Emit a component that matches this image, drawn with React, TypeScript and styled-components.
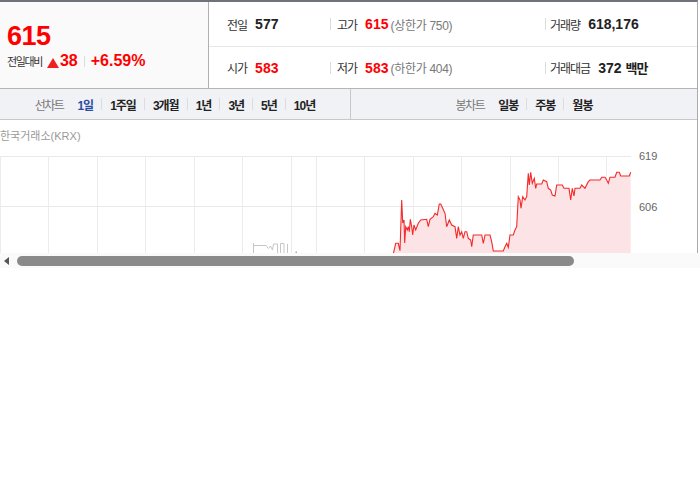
import React from 'react';
import styled, { createGlobalStyle } from 'styled-components';

const Global = createGlobalStyle`
  *, *::before, *::after { box-sizing: border-box; }
  html, body { margin: 0; padding: 0; background: #fff; }
  body { font-family: "Liberation Sans", "Noto Sans CJK KR", sans-serif; color: #222; }
`;

const Frame = styled.div`
  width: 700px;
`;

const Viewport = styled.div`
  height: 253px;
  overflow: hidden;
`;

const ScrollBar = styled.div`
  display: flex;
  align-items: center;
  height: 15px;
  background: #fafafa;
  padding-left: 4px;
`;

const ArrowLeft = styled.svg`
  width: 5px;
  height: 8px;
  margin-right: 8px;
`;

const Thumb = styled.div`
  width: 557px;
  height: 10px;
  border-radius: 5px;
  background: #8a8a8a;
`;

const Board = styled.div`
  width: 698px;
  border-top: 2px solid #6f727b;
  border-right: 1px solid #aaa;
`;

const Header = styled.div`
  display: flex;
  height: 87px;
  border-bottom: 1px solid #b5b5b5;
`;

const PricePanel = styled.div`
  width: 209px;
  padding: 19px 0 0 7px;
  background: #fafafa;
  border-right: 1px solid #b0b0b0;
`;

const BigPrice = styled.div`
  font-size: 27px;
  line-height: 30px;
  font-weight: 700;
  color: #f00;
  letter-spacing: -0.5px;
`;

const ChangeRow = styled.div`
  display: flex;
  align-items: baseline;
  line-height: 20px;
`;

const ChangeLabel = styled.span`
  font-size: 11px;
  letter-spacing: -1.4px;
  color: #333;
  margin-right: 5px;
`;

const UpMark = styled.svg`
  width: 12px;
  height: 10px;
  margin-right: 1px;
  align-self: center;
  position: relative;
  top: 1px;
`;

const ChangeNum = styled.span`
  font-size: 16px;
  font-weight: 700;
  color: #f00;
`;

const MiniSep = styled.span`
  display: inline-block;
  width: 1px;
  height: 11px;
  background: #ddd;
  margin: 0 6px;
  align-self: center;
`;

const Stats = styled.div`
  flex: 1;
  display: grid;
  grid-template-columns: 121px 215px 1fr;
  grid-template-rows: 45px 1fr;
`;

const Cell = styled.div<{ $top?: boolean; $pad: number }>`
  display: flex;
  align-items: center;
  padding-left: ${(p) => p.$pad}px;
  border-bottom: ${(p) => (p.$top ? '1px solid #e6e6e6' : 'none')};
  white-space: nowrap;
`;

const CellSep = styled.span<{ $gap: number }>`
  width: 1px;
  height: 12px;
  background: #dcdcdc;
  margin-right: ${(p) => p.$gap}px;
`;

const Label = styled.span`
  font-size: 12px;
  letter-spacing: -1px;
  color: #333;
  margin-right: 8px;
`;

const Value = styled.span<{ $red?: boolean }>`
  font-size: 14px;
  font-weight: 700;
  color: ${(p) => (p.$red ? '#f00' : '#222')};
`;

const Note = styled.span`
  font-size: 12px;
  color: #777;
  margin-left: 2px;
  letter-spacing: -0.3px;
`;

const Unit = styled.span`
  font-size: 13px;
  font-weight: 700;
  color: #222;
  margin-left: 4px;
  letter-spacing: -1px;
`;

const TabBar = styled.div`
  display: grid;
  grid-template-columns: 351px 1fr;
  height: 31px;
  background: #f1f2f6;
  border-bottom: 1px solid #c8c8c8;
`;

const TabGroup = styled.div<{ $divider?: boolean }>`
  display: flex;
  align-items: center;
  justify-content: center;
  border-right: ${(p) => (p.$divider ? '1px solid #c8c8c8' : 'none')};
`;

const TabTitle = styled.span`
  font-size: 12px;
  letter-spacing: -1.5px;
  color: #777;
  margin-right: 14px;
`;

const Tab = styled.span<{ $active?: boolean }>`
  font-size: 12px;
  font-weight: 700;
  letter-spacing: -1px;
  color: ${(p) => (p.$active ? '#2a4d9f' : '#222')};
`;

const TabSep = styled.span`
  width: 1px;
  height: 12px;
  background: #dcdcdc;
  margin: 0 8px;
`;

const ChartArea = styled.div`
  padding-top: 9px;
  height: 260px;
`;

const Source = styled.div`
  font-size: 11px;
  line-height: 14px;
  color: #999;
  margin-bottom: 3px;
`;

const ChartSvg = styled.svg`
  display: block;
`;

const redPts: [number, number][] = [
  [393.3, 254], [395.7, 243.3], [398.3, 243.3], [400, 250.7], [401.7, 200], [402.7, 223], [404, 220],
  [404.7, 243], [405.7, 226.7], [407.3, 230], [408.3, 226.7], [409.3, 231.7], [410.3, 219.3],
  [411.7, 226.7], [412.7, 235], [414, 225], [415.7, 230], [418.3, 223.3], [420.7, 220], [426.7, 219.3],
  [428.3, 226.7], [430, 219.3], [433.3, 216.7], [435, 213.3], [437.3, 215], [439.3, 204], [440.7, 204],
  [442.7, 208.3], [445, 213.3], [446.7, 226.7], [449.3, 220], [451.7, 225], [455, 226.7], [456.7, 238.3],
  [458.3, 226.7], [460, 235], [461.7, 231.7], [463.3, 238.3], [465, 231.7], [466.7, 231.7], [468.3, 238.3],
  [470.7, 240], [471.7, 246.7], [473.3, 235], [481.7, 235], [483.3, 243.3], [485, 235], [490, 235],
  [491.7, 241.7], [493.3, 251], [503.3, 251], [505, 246.7], [506.7, 243.3], [508.3, 247.3], [510, 235],
  [513.3, 235], [515, 230], [516.7, 226.7], [518.3, 196.7], [520, 200], [521, 208.3], [522.7, 196.7],
  [525, 200], [526.7, 196.7], [528.3, 173.3], [529.3, 185], [530.7, 172.3], [532.3, 183.3], [534.3, 178.3],
  [535.7, 188.3], [536.7, 184], [541.7, 184], [543.3, 180], [546.7, 181.7], [548.3, 188.3], [550.7, 190],
  [552.3, 195], [555, 196], [556.7, 185], [562.3, 185], [564, 188.3], [569, 188.3], [570.7, 200],
  [572.3, 188.3], [574, 196], [575, 188.3], [580, 188.3], [581.7, 185], [585, 188.3], [588.3, 181.7],
  [590, 180], [600, 180], [601.7, 177.3], [605, 177.3], [606.7, 180], [608.3, 183.3], [610, 177.3],
  [615, 177.3], [616.7, 172.3], [619.3, 172.3], [620.7, 176], [629.3, 176], [630.7, 172.3],
];

const vLines = [0.5, 48.5, 97.5, 145.5, 194.5, 242.5, 291.5, 316.5, 364.5, 413.5, 461.5, 510.5, 558.5, 606.5];
const hLines = [156.5, 206.5, 256.5, 306.5];

const Chart: React.FC = () => {
  const line = redPts.map((p) => p.join(',')).join(' ');
  const area = `${line} 630.7,360 393.3,360`;
  return (
    <ChartSvg width={697} height={200} viewBox="0 146 697 200">
      {hLines.map((y) => (
        <line key={y} x1={0} x2={631} y1={y} y2={y} stroke="#e9e9e9" strokeWidth={1} />
      ))}
      {vLines.map((x) => (
        <line key={x} x1={x} x2={x} y1={156} y2={346} stroke="#ececec" strokeWidth={1} />
      ))}
      <polygon points={area} fill="#fce4e6" />
      <polyline points={line} fill="none" stroke="#f42a2a" strokeWidth={1.1} />
      <path
        d="M253.5 256 V243 M253.5 245.5 H266 L268.5 248.5 L270.5 246 L272.5 250 L273.5 244 H277.5 V256 M280.5 256 V243.5 H284 V256 M287.5 244 V256"
        fill="none"
        stroke="#c6c6c6"
        strokeWidth={1}
      />
      <rect x={295.5} y={251.5} width={1.5} height={1.5} fill="#aaa" />
      <g fill="#666" fontSize={11} fontFamily="'Liberation Sans', sans-serif">
        <text x={639} y={160}>619</text>
        <text x={639} y={210.5}>606</text>
        <text x={639} y={260.5}>594</text>
      </g>
    </ChartSvg>
  );
};

const App: React.FC = () => {
  return (
    <>
      <Global />
      <Frame>
        <Viewport>
          <Board>
            <Header>
              <PricePanel>
                <BigPrice>615</BigPrice>
                <ChangeRow>
                  <ChangeLabel>전일대비</ChangeLabel>
                  <UpMark viewBox="0 0 12 10">
                    <polygon points="6,0 12,10 0,10" fill="#f02020" />
                  </UpMark>
                  <ChangeNum>38</ChangeNum>
                  <MiniSep />
                  <ChangeNum>+6.59%</ChangeNum>
                </ChangeRow>
              </PricePanel>
              <Stats>
                <Cell $top $pad={18}>
                  <Label>전일</Label>
                  <Value>577</Value>
                </Cell>
                <Cell $top $pad={0}>
                  <CellSep $gap={6} />
                  <Label>고가</Label>
                  <Value $red>615</Value>
                  <Note>(상한가 750)</Note>
                </Cell>
                <Cell $top $pad={0}>
                  <CellSep $gap={4} />
                  <Label>거래량</Label>
                  <Value>618,176</Value>
                </Cell>
                <Cell $pad={18}>
                  <Label>시가</Label>
                  <Value $red>583</Value>
                </Cell>
                <Cell $pad={0}>
                  <CellSep $gap={6} />
                  <Label>저가</Label>
                  <Value $red>583</Value>
                  <Note>(하한가 404)</Note>
                </Cell>
                <Cell $pad={0}>
                  <CellSep $gap={4} />
                  <Label>거래대금</Label>
                  <Value>372</Value>
                  <Unit>백만</Unit>
                </Cell>
              </Stats>
            </Header>
            <TabBar>
              <TabGroup $divider>
                <TabTitle>선차트</TabTitle>
                <Tab $active>1일</Tab>
                <TabSep />
                <Tab>1주일</Tab>
                <TabSep />
                <Tab>3개월</Tab>
                <TabSep />
                <Tab>1년</Tab>
                <TabSep />
                <Tab>3년</Tab>
                <TabSep />
                <Tab>5년</Tab>
                <TabSep />
                <Tab>10년</Tab>
              </TabGroup>
              <TabGroup>
                <TabTitle>봉차트</TabTitle>
                <Tab>일봉</Tab>
                <TabSep />
                <Tab>주봉</Tab>
                <TabSep />
                <Tab>월봉</Tab>
              </TabGroup>
            </TabBar>
            <ChartArea>
              <Source>한국거래소(KRX)</Source>
              <Chart />
            </ChartArea>
          </Board>
        </Viewport>
        <ScrollBar>
          <ArrowLeft viewBox="0 0 5 8">
            <polygon points="5,0 5,8 0,4" fill="#555" />
          </ArrowLeft>
          <Thumb />
        </ScrollBar>
      </Frame>
    </>
  );
};

export default App;
